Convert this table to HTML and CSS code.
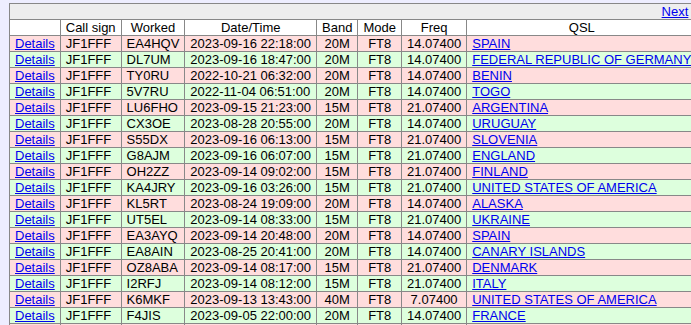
FILE: index.html
```html
<!DOCTYPE html>
<html>
<head>
<meta charset="utf-8">
<link rel="stylesheet" href="styles.css">
</head>
<body>
<table class="log">
<tr class="nav"><td colspan="8" class="nav-cell"><a href="#">Next</a></td></tr>
<tr class="head"><th></th><th>Call sign</th><th>Worked</th><th>Date/Time</th><th>Band</th><th>Mode</th><th>Freq</th><th>QSL</th></tr>
<tr class="odd"><td><a href="#">Details</a></td><td>JF1FFF</td><td>EA4HQV</td><td>2023-09-16 22:18:00</td><td class="c">20M</td><td class="c">FT8</td><td class="c">14.07400</td><td><a href="#">SPAIN</a></td></tr>
<tr class="even"><td><a href="#">Details</a></td><td>JF1FFF</td><td>DL7UM</td><td>2023-09-16 18:47:00</td><td class="c">20M</td><td class="c">FT8</td><td class="c">14.07400</td><td><a href="#">FEDERAL REPUBLIC OF GERMANY</a></td></tr>
<tr class="odd"><td><a href="#">Details</a></td><td>JF1FFF</td><td>TY0RU</td><td>2022-10-21 06:32:00</td><td class="c">20M</td><td class="c">FT8</td><td class="c">14.07400</td><td><a href="#">BENIN</a></td></tr>
<tr class="even"><td><a href="#">Details</a></td><td>JF1FFF</td><td>5V7RU</td><td>2022-11-04 06:51:00</td><td class="c">20M</td><td class="c">FT8</td><td class="c">14.07400</td><td><a href="#">TOGO</a></td></tr>
<tr class="odd"><td><a href="#">Details</a></td><td>JF1FFF</td><td>LU6FHO</td><td>2023-09-15 21:23:00</td><td class="c">15M</td><td class="c">FT8</td><td class="c">21.07400</td><td><a href="#">ARGENTINA</a></td></tr>
<tr class="even"><td><a href="#">Details</a></td><td>JF1FFF</td><td>CX3OE</td><td>2023-08-28 20:55:00</td><td class="c">20M</td><td class="c">FT8</td><td class="c">14.07400</td><td><a href="#">URUGUAY</a></td></tr>
<tr class="odd"><td><a href="#">Details</a></td><td>JF1FFF</td><td>S55DX</td><td>2023-09-16 06:13:00</td><td class="c">15M</td><td class="c">FT8</td><td class="c">21.07400</td><td><a href="#">SLOVENIA</a></td></tr>
<tr class="even"><td><a href="#">Details</a></td><td>JF1FFF</td><td>G8AJM</td><td>2023-09-16 06:07:00</td><td class="c">15M</td><td class="c">FT8</td><td class="c">21.07400</td><td><a href="#">ENGLAND</a></td></tr>
<tr class="odd"><td><a href="#">Details</a></td><td>JF1FFF</td><td>OH2ZZ</td><td>2023-09-14 09:02:00</td><td class="c">15M</td><td class="c">FT8</td><td class="c">21.07400</td><td><a href="#">FINLAND</a></td></tr>
<tr class="even"><td><a href="#">Details</a></td><td>JF1FFF</td><td>KA4JRY</td><td>2023-09-16 03:26:00</td><td class="c">15M</td><td class="c">FT8</td><td class="c">21.07400</td><td><a href="#">UNITED STATES OF AMERICA</a></td></tr>
<tr class="odd"><td><a href="#">Details</a></td><td>JF1FFF</td><td>KL5RT</td><td>2023-08-24 19:09:00</td><td class="c">20M</td><td class="c">FT8</td><td class="c">14.07400</td><td><a href="#">ALASKA</a></td></tr>
<tr class="even"><td><a href="#">Details</a></td><td>JF1FFF</td><td>UT5EL</td><td>2023-09-14 08:33:00</td><td class="c">15M</td><td class="c">FT8</td><td class="c">21.07400</td><td><a href="#">UKRAINE</a></td></tr>
<tr class="odd"><td><a href="#">Details</a></td><td>JF1FFF</td><td>EA3AYQ</td><td>2023-09-14 20:48:00</td><td class="c">20M</td><td class="c">FT8</td><td class="c">14.07400</td><td><a href="#">SPAIN</a></td></tr>
<tr class="even"><td><a href="#">Details</a></td><td>JF1FFF</td><td>EA8AIN</td><td>2023-08-25 20:41:00</td><td class="c">20M</td><td class="c">FT8</td><td class="c">14.07400</td><td><a href="#">CANARY ISLANDS</a></td></tr>
<tr class="odd"><td><a href="#">Details</a></td><td>JF1FFF</td><td>OZ8ABA</td><td>2023-09-14 08:17:00</td><td class="c">15M</td><td class="c">FT8</td><td class="c">21.07400</td><td><a href="#">DENMARK</a></td></tr>
<tr class="even"><td><a href="#">Details</a></td><td>JF1FFF</td><td>I2RFJ</td><td>2023-09-14 08:12:00</td><td class="c">15M</td><td class="c">FT8</td><td class="c">21.07400</td><td><a href="#">ITALY</a></td></tr>
<tr class="odd"><td><a href="#">Details</a></td><td>JF1FFF</td><td>K6MKF</td><td>2023-09-13 13:43:00</td><td class="c">40M</td><td class="c">FT8</td><td class="c">7.07400</td><td><a href="#">UNITED STATES OF AMERICA</a></td></tr>
<tr class="even"><td><a href="#">Details</a></td><td>JF1FFF</td><td>F4JIS</td><td>2023-09-05 22:00:00</td><td class="c">20M</td><td class="c">FT8</td><td class="c">14.07400</td><td><a href="#">FRANCE</a></td></tr>
<tr class="odd"><td></td><td></td><td></td><td></td><td></td><td></td><td></td><td></td></tr>
</table>
</body>
</html>
```
FILE: styles.css
```css
html, body {
  margin: 0;
  background: #eeeeff;
}
body {
  padding: 3px 0 0 9px;
  font-family: "Liberation Sans", Arial, sans-serif;
  font-size: 13px;
  color: #000;
  overflow: hidden;
}
.log {
  border-collapse: collapse;
  border: 1px solid #888;
  white-space: nowrap;
}
.log td, .log th {
  border: 1px solid #888;
  padding: 0 5px;
  line-height: 15px;
  height: 15px;
}
.log th {
  font-weight: normal;
  background: #fff;
  text-align: center;
}
.log td.nav-cell {
  background: #eeeeee;
  text-align: right;
  padding-right: 8px;
}
.log a {
  color: #0000ee;
}
.log tr.odd td {
  background: #ffdddd;
}
.log tr.even td {
  background: #ddffdd;
}
.log td.c {
  text-align: center;
}
```
